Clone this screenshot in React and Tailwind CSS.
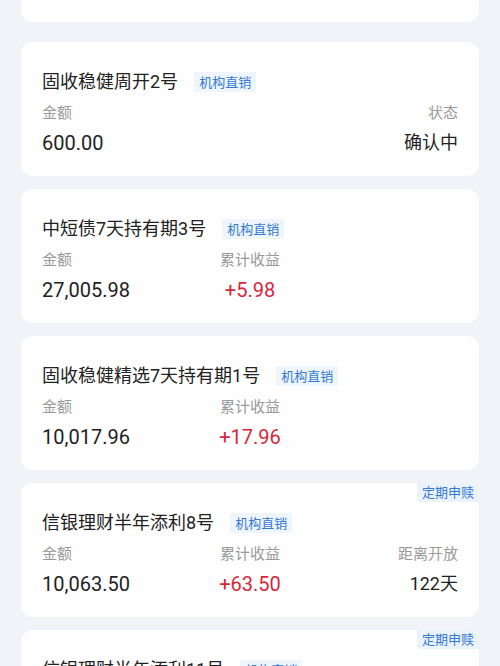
const items = [
  {
    name: '固收稳健周开2号',
    amount: '600.00',
    right: { label: '状态', value: '确认中' },
  },
  {
    name: '中短债7天持有期3号',
    amount: '27,005.98',
    profit: '+5.98',
  },
  {
    name: '固收稳健精选7天持有期1号',
    amount: '10,017.96',
    profit: '+17.96',
  },
  {
    name: '信银理财半年添利8号',
    amount: '10,063.50',
    profit: '+63.50',
    right: { label: '距离开放', value: '122天' },
    tag: '定期申赎',
  },
  {
    name: '信银理财半年添利11号',
    amount: '10,000.00',
    profit: '+0.00',
    right: { label: '距离开放', value: '150天' },
    tag: '定期申赎',
  },
];

function HoldingCard({ item }) {
  return (
    <div className="relative bg-[#fefefe] rounded-[12px] px-[21px] pt-[27px] pb-[19px] h-[134px] shrink-0">
      {item.tag && (
        <span className="absolute top-0 right-0 h-[19px] px-[5px] flex items-center bg-[#eaf3fd] text-[#3579d3] text-[13px] leading-none rounded-tr-[12px] rounded-bl-[4px]">
          {item.tag}
        </span>
      )}
      <div className="flex items-center h-[26px]">
        <span className="text-[18px] text-[#222] leading-[26px]">{item.name}</span>
        <span className="ml-[16px] h-[20px] px-[5px] flex items-center bg-[#eef5fc] text-[#3579d3] text-[13px] leading-none rounded-[2px]">
          机构直销
        </span>
      </div>
      <div className="grid grid-cols-3 mt-[7px]">
        <div className="text-left">
          <div className="text-[15px] leading-[22px] text-[#9a9a9a]">金额</div>
          <div className="mt-[5px] text-[20px] leading-[28px] text-[#222]">{item.amount}</div>
        </div>
        <div className="text-center">
          {item.profit && (
            <>
              <div className="text-[15px] leading-[22px] text-[#9a9a9a]">累计收益</div>
              <div className="mt-[5px] text-[20px] leading-[28px] text-[#d6283b]">{item.profit}</div>
            </>
          )}
        </div>
        <div className="text-right">
          {item.right && (
            <>
              <div className="text-[15px] leading-[22px] text-[#9a9a9a]">{item.right.label}</div>
              <div className="mt-[5px] text-[18px] leading-[28px] text-[#222]">{item.right.value}</div>
            </>
          )}
        </div>
      </div>
    </div>
  );
}

export default function App() {
  return (
    <div
      className="w-[500px] h-[666px] overflow-hidden bg-[#f2f3f8] px-[21px] flex flex-col"
      style={{ fontFamily: 'Roboto, "Noto Sans CJK SC", sans-serif' }}
    >
      {/* card scrolled off the top */}
      <div className="h-[22px] shrink-0 bg-[#fefefe] rounded-b-[12px]" />
      <div className="flex flex-col gap-[13px] mt-[20px]">
        {items.map((item) => (
          <HoldingCard key={item.name} item={item} />
        ))}
      </div>
    </div>
  );
}
